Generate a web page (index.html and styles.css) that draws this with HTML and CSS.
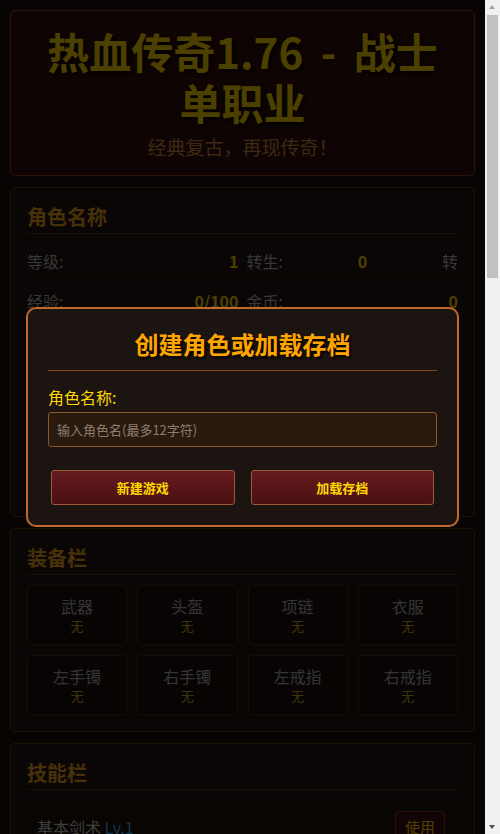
FILE: index.html
```html
<!DOCTYPE html>
<html lang="zh-CN">
  <head>
    <meta charset="UTF-8" />
    <meta name="viewport" content="width=device-width, initial-scale=1" />
    <title>热血传奇1.76 - 战士单职业</title>
    <link rel="stylesheet" href="styles.css">
  </head>
  <body>
    <div class="game">
      <!-- 标题 -->
      <header class="game-header">
        <h1>热血传奇1.76 - 战士单职业</h1>
        <p class="subtitle">经典复古，再现传奇！</p>
      </header>

      <!-- 角色信息 -->
      <section class="panel">
        <h3 class="panel-title">角色名称</h3>
        <div class="stats">
          <div class="stat"><span>等级:</span><span class="val">1</span></div>
          <div class="stat"><span>转生:</span><span class="val">0</span><span>转</span></div>
          <div class="stat"><span>经验:</span><span class="val">0/100</span></div>
          <div class="stat"><span>金币:</span><span class="val">0</span></div>
          <div class="stat"><span>生命:</span><span class="val">100/100</span></div>
          <div class="stat"><span>魔法:</span><span class="val">20/20</span></div>
          <div class="stat"><span>攻击:</span><span class="val">5-8</span></div>
          <div class="stat"><span>防御:</span><span class="val">0-2</span></div>
          <div class="stat"><span>魔防:</span><span class="val">0-0</span></div>
          <div class="stat"><span>幸运:</span><span class="val">0</span></div>
          <div class="stat"><span>准确:</span><span class="val">5</span></div>
          <div class="stat"><span>敏捷:</span><span class="val">5</span></div>
        </div>
        <div class="exp-bar"><div class="exp-fill"></div></div>
      </section>

      <!-- 装备栏 -->
      <section class="panel">
        <h3 class="panel-title">装备栏</h3>
        <div class="equip-grid">
          <div class="slot"><div class="slot-name">武器</div><div class="slot-item">无</div></div>
          <div class="slot"><div class="slot-name">头盔</div><div class="slot-item">无</div></div>
          <div class="slot"><div class="slot-name">项链</div><div class="slot-item">无</div></div>
          <div class="slot"><div class="slot-name">衣服</div><div class="slot-item">无</div></div>
          <div class="slot"><div class="slot-name">左手镯</div><div class="slot-item">无</div></div>
          <div class="slot"><div class="slot-name">右手镯</div><div class="slot-item">无</div></div>
          <div class="slot"><div class="slot-name">左戒指</div><div class="slot-item">无</div></div>
          <div class="slot"><div class="slot-name">右戒指</div><div class="slot-item">无</div></div>
        </div>
      </section>

      <!-- 技能栏 -->
      <section class="panel">
        <h3 class="panel-title">技能栏</h3>
        <div class="skill"><span>基本剑术 <em>Lv.1</em></span><button class="small-btn">使用</button></div>
        <div class="skill"><span>攻杀剑术 <em>未学习</em></span><button class="small-btn">学习</button></div>
        <div class="skill"><span>刺杀剑术 <em>未学习</em></span><button class="small-btn">学习</button></div>
        <div class="skill"><span>半月弯刀 <em>未学习</em></span><button class="small-btn">学习</button></div>
        <div class="skill"><span>野蛮冲撞 <em>未学习</em></span><button class="small-btn">学习</button></div>
        <div class="skill"><span>烈火剑法 <em>未学习</em></span><button class="small-btn">学习</button></div>
      </section>

      <!-- 地图 -->
      <section class="panel">
        <h3 class="panel-title">地图</h3>
        <div class="map-grid">
          <button class="map-btn">比奇城</button>
          <button class="map-btn">沃玛森林</button>
          <button class="map-btn">骷髅洞</button>
          <button class="map-btn">僵尸洞</button>
          <button class="map-btn">沃玛寺庙</button>
          <button class="map-btn">祖玛寺庙</button>
          <button class="map-btn">赤月峡谷</button>
          <button class="map-btn">牛魔寺庙</button>
        </div>
      </section>

      <!-- 背包 -->
      <section class="panel">
        <h3 class="panel-title">背包</h3>
        <div class="bag-grid">
          <div class="bag-cell"></div><div class="bag-cell"></div><div class="bag-cell"></div><div class="bag-cell"></div><div class="bag-cell"></div>
          <div class="bag-cell"></div><div class="bag-cell"></div><div class="bag-cell"></div><div class="bag-cell"></div><div class="bag-cell"></div>
          <div class="bag-cell"></div><div class="bag-cell"></div><div class="bag-cell"></div><div class="bag-cell"></div><div class="bag-cell"></div>
          <div class="bag-cell"></div><div class="bag-cell"></div><div class="bag-cell"></div><div class="bag-cell"></div><div class="bag-cell"></div>
        </div>
      </section>

      <!-- 战斗日志 -->
      <section class="panel">
        <h3 class="panel-title">战斗日志</h3>
        <div class="log">
          <p>欢迎来到玛法大陆！</p>
        </div>
      </section>
    </div>

    <!-- 创建角色弹窗 -->
    <div class="overlay">
      <div class="modal">
        <h2 class="modal-title">创建角色或加载存档</h2>
        <label class="modal-label" for="role-name">角色名称:</label>
        <input id="role-name" class="modal-input" type="text" placeholder="输入角色名(最多12字符)" />
        <div class="modal-actions">
          <button class="btn">新建游戏</button>
          <button class="btn">加载存档</button>
        </div>
      </div>
    </div>

    <!-- 滚动条 -->
    <div class="scrollbar" aria-hidden="true">
      <div class="sb-btn sb-up"></div>
      <div class="sb-track"><div class="sb-thumb"></div></div>
      <div class="sb-btn sb-down"></div>
    </div>
  </body>
</html>
```

FILE: styles.css
```css
/*—— 全局 ——*/
* {
  box-sizing: border-box;
}

body {
  margin: 0 15px 0 0;
  padding: 10px;
  background: #1a0f0a;
  color: #cccccc;
  font-family: "Noto Sans CJK SC", "Noto Sans", sans-serif;
  font-size: 16px;
}

.game {
  display: flex;
  flex-direction: column;
  gap: 11px;
}

/*—— 标题 ——*/
.game-header {
  padding: 14px 20px 16px;
  text-align: center;
  background: #300f0a;
  border: 1px solid #8b4513;
  border-radius: 5px;
}
.game-header h1 {
  margin: 0;
  font-size: 42px;
  line-height: 51px;
  font-weight: 700;
  word-spacing: 8px;
  color: #ffd700;
  text-shadow: 2px 2px 4px #000;
}
.subtitle {
  margin: 8px 0 0;
  font-size: 19px;
  line-height: 24px;
  color: #cd853f;
}

/*—— 面板 ——*/
.panel {
  padding: 16px;
  background: #1f1511;
  border: 1px solid #6b3a16;
  border-radius: 5px;
}
.panel-title {
  margin: 0 0 10px;
  padding-bottom: 3px;
  font-size: 20px;
  line-height: 26px;
  font-weight: 700;
  color: #f0a020;
  border-bottom: 1px solid #5a3418;
}

/*—— 属性 ——*/
.stats {
  display: grid;
  grid-template-columns: 1fr 1fr;
  column-gap: 8px;
}
.stat {
  display: flex;
  justify-content: space-between;
  padding: 6px 0;
  margin-bottom: 5px;
  line-height: 22px;
  color: #b8b8b8;
  border-bottom: 1px solid #3a2516;
}
.stat .val {
  color: #ffd700;
  font-weight: 700;
}
.exp-bar {
  height: 12px;
  margin-top: 4px;
  background: #2a1a0e;
  border: 1px solid #5a3418;
  border-radius: 6px;
  overflow: hidden;
}
.exp-fill {
  width: 0;
  height: 100%;
  background: #ffd700;
}

/*—— 装备 ——*/
.equip-grid {
  display: grid;
  grid-template-columns: repeat(4, 1fr);
  gap: 10px;
}
.slot {
  padding: 9px 4px;
  text-align: center;
  background: #1a100c;
  border: 1px solid #4a2c16;
  border-radius: 3px;
}
.slot-name {
  font-size: 16px;
  line-height: 22px;
  color: #b0b0b0;
}
.slot-item {
  font-size: 13px;
  line-height: 18px;
  color: #d4b020;
}

/*—— 技能 ——*/
.skill {
  display: flex;
  justify-content: space-between;
  align-items: center;
  margin-bottom: 8px;
  padding: 10px 12px 10px 9px;
  background: #1c120d;
  border: 1px solid #2e1c10;
  border-radius: 4px;
  line-height: 24px;
}
.skill em {
  font-style: normal;
  color: #3fb0f0;
}
.small-btn {
  padding: 4px 9px;
  font-family: inherit;
  font-size: 15px;
  color: #ffd700;
  background: #3a0e0e;
  border: 1px solid #8b2a2a;
  border-radius: 4px;
}

/*—— 地图 ——*/
.map-grid {
  display: grid;
  grid-template-columns: repeat(2, 1fr);
  gap: 10px;
}
.map-btn {
  padding: 10px;
  font-family: inherit;
  font-size: 15px;
  color: #ffd700;
  background: linear-gradient(#5a1818, #3c0e0e);
  border: 1px solid #8b4a2a;
  border-radius: 4px;
}

/*—— 背包 ——*/
.bag-grid {
  display: grid;
  grid-template-columns: repeat(5, 1fr);
  gap: 8px;
}
.bag-cell {
  height: 76px;
  background: #1a100c;
  border: 1px solid #4a2c16;
  border-radius: 3px;
}

/*—— 日志 ——*/
.log {
  height: 300px;
  padding: 8px;
  background: #120a07;
  border: 1px solid #3a2516;
  font-size: 14px;
}
.log p {
  margin: 0;
}

/*—— 弹窗 ——*/
.overlay {
  position: fixed;
  top: 0;
  bottom: 0;
  left: 0;
  right: 15px;
  display: flex;
  align-items: center;
  justify-content: center;
  background: rgba(0, 0, 0, 0.7);
}
.modal {
  width: 433px;
  padding: 20px;
  background: #1c1410;
  border: 2px solid #c0692d;
  border-radius: 10px;
}
.modal-title {
  margin: 0 0 15px;
  padding-bottom: 11px;
  font-size: 24px;
  line-height: 30px;
  font-weight: 700;
  text-align: center;
  color: #ffa500;
  text-shadow: 2px 2px 3px #000;
  border-bottom: 1px solid #8b4513;
}
.modal-label {
  display: block;
  margin-bottom: 4px;
  font-size: 16px;
  line-height: 22px;
  color: #ffd700;
}
.modal-input {
  display: block;
  width: 100%;
  height: 35px;
  padding: 0 8px;
  font-family: inherit;
  font-size: 13px;
  color: #eeeeee;
  background: #2a1a0e;
  border: 1px solid #8b5a2b;
  border-radius: 3px;
}
.modal-input::placeholder {
  color: #8a7f74;
}
.modal-actions {
  display: flex;
  gap: 10px;
  margin-top: 23px;
}
.btn {
  flex: 1;
  margin: 0 3px;
  height: 35px;
  font-family: inherit;
  font-size: 13px;
  font-weight: 700;
  color: #ffd700;
  background: linear-gradient(#661a1e, #4a1012);
  border: 1px solid #9a5a3a;
  border-radius: 3px;
  cursor: pointer;
}

/*—— 滚动条 ——*/
.scrollbar {
  position: fixed;
  top: 0;
  right: 0;
  bottom: 0;
  width: 15px;
  display: flex;
  flex-direction: column;
  background: #f1f1f1;
}
.sb-btn {
  position: relative;
  height: 15px;
}
.sb-btn::after {
  content: "";
  position: absolute;
  left: 4px;
  border-left: 3.5px solid transparent;
  border-right: 3.5px solid transparent;
}
.sb-up::after {
  top: 5px;
  border-bottom: 4px solid #a3a3a3;
}
.sb-down::after {
  bottom: 5px;
  border-top: 4px solid #505050;
}
.sb-track {
  flex: 1;
}
.sb-thumb {
  height: 263px;
  margin: 0 2px;
  background: #c1c1c1;
}
```
